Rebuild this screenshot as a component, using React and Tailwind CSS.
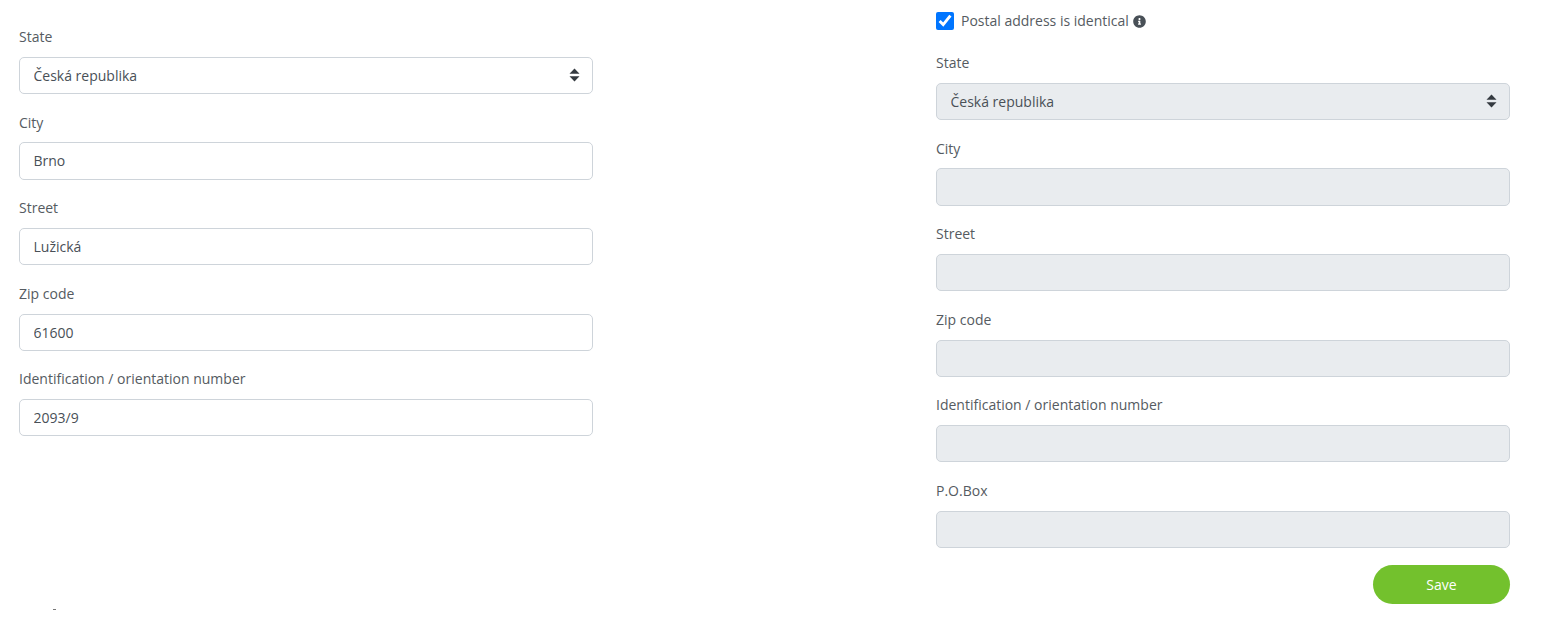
import React from 'react';
import { FaInfoCircle } from 'react-icons/fa';

const leftFields = [
    { label: 'City', value: 'Brno' },
    { label: 'Street', value: 'Lužická' },
    { label: 'Zip code', value: '61600' },
    { label: 'Identification / orientation number', value: '2093/9' },
];

const rightFields = [
    { label: 'City', value: '' },
    { label: 'Street', value: '' },
    { label: 'Zip code', value: '' },
    { label: 'Identification / orientation number', value: '' },
    { label: 'P.O.Box', value: '' },
];

const Field = ({ label, children }) => (
    <div className="mb-[17.55px]">
        <label className="block h-[21px] mb-[9.75px] text-sm leading-[21px] text-[#555b61]">{label}</label>
        {children}
    </div>
);

const TextField = ({ label, value, disabled }) => (
    <Field label={label}>
        <input
            type="text"
            readOnly
            disabled={disabled}
            value={value}
            className={`block w-full h-[37.3px] px-[13.5px] text-sm text-[#495057] border border-[#ced4da] rounded-[5px] ${disabled ? 'bg-[#e9ecef]' : 'bg-white'}`}
        />
    </Field>
);

const SelectField = ({ label, value, disabled }) => (
    <Field label={label}>
        <div className="relative">
            <select
                disabled={disabled}
                defaultValue={value}
                className={`block w-full h-[37.3px] px-[13.5px] pt-[2px] text-sm text-[#495057] border border-[#ced4da] rounded-[5px] appearance-none ${disabled ? 'bg-[#e9ecef] opacity-100' : 'bg-white'}`}
            >
                <option>{value}</option>
            </select>
            <svg className="absolute right-[13px] top-[11.5px] w-[11px] h-[14px] text-[#343a40]" viewBox="0 0 11 14" fill="currentColor">
                <path d="M5.5 0.5 L10.5 5.8 H0.5 Z" />
                <path d="M0.5 8.2 H10.5 L5.5 13.5 Z" />
            </svg>
        </div>
    </Field>
);

const App = () => {
    return (
        <div className="flex h-[626px] overflow-hidden bg-white font-['Open_Sans',sans-serif]">
            <div className="w-[574px] ml-[19px] pt-[26px]">
                <SelectField label="State" value="Česká republika" />
                {leftFields.map((field) => (
                    <TextField key={field.label} label={field.label} value={field.value} />
                ))}
                <div className="w-[3px] h-px ml-[34px] mt-[173px] bg-[#777]" />
            </div>

            <div className="w-[574px] ml-[343px] pt-[12px]">
                <div className="flex items-center h-[18px] mb-[22px] text-sm text-[#555b61]">
                    <input type="checkbox" defaultChecked className="w-[18px] h-[18px] m-0 mr-[7px]" />
                    <span>Postal address is identical</span>
                    <FaInfoCircle className="ml-[4px] w-[13px] h-[13px] text-[#495057]" />
                </div>
                <SelectField label="State" value="Česká republika" disabled />
                {rightFields.map((field) => (
                    <TextField key={field.label} label={field.label} value={field.value} disabled />
                ))}
                <div className="flex justify-end -mt-[0.6px]">
                    <button className="w-[137px] h-[39px] pt-px text-sm font-medium text-white bg-[#73c12d] rounded-full">Save</button>
                </div>
            </div>
        </div>
    );
};

export default App;
